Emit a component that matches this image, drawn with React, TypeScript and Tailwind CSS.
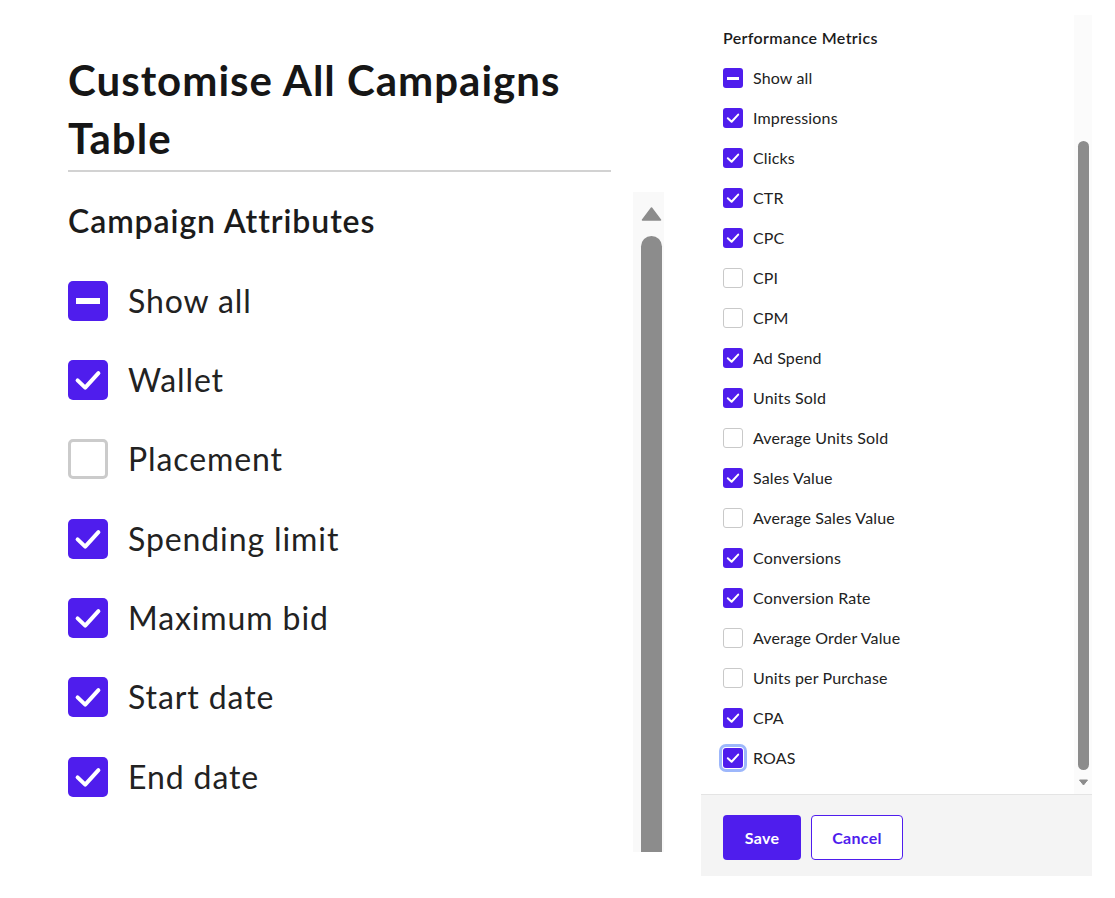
import React from "react";

type CheckState = "checked" | "unchecked" | "mixed";

function SmallBox({ state, focused }: { state: CheckState; focused?: boolean }) {
  const ring = focused ? "ring-[3px] ring-[#9db7fb] ring-offset-1 ring-offset-white" : "";
  if (state === "unchecked") {
    return <span className="block w-[20px] h-[20px] rounded-[3px] border-[1.5px] border-[#c9c9c9] bg-white shrink-0" />;
  }
  return (
    <span className={`flex items-center justify-center w-[20px] h-[20px] rounded-[3px] bg-[#4f1ded] shrink-0 ${ring}`}>
      {state === "checked" ? (
        <svg width="20" height="20" viewBox="0 0 20 20" fill="none">
          <path d="M4.8 10.2 L8.6 13.8 L15.2 6.6" stroke="white" strokeWidth="2" strokeLinecap="round" strokeLinejoin="round" />
        </svg>
      ) : (
        <span className="block w-[12px] h-[3px] bg-white" />
      )}
    </span>
  );
}

function LargeBox({ state }: { state: CheckState }) {
  if (state === "unchecked") {
    return <span className="block w-[40px] h-[40px] rounded-[5px] border-[3px] border-[#cbcbcb] bg-white shrink-0" />;
  }
  return (
    <span className="flex items-center justify-center w-[40px] h-[40px] rounded-[5px] bg-[#4f1ded] shrink-0">
      {state === "checked" ? (
        <svg width="40" height="40" viewBox="0 0 40 40" fill="none">
          <path d="M9.6 20.4 L17.2 27.6 L30.4 13.2" stroke="white" strokeWidth="4" strokeLinecap="round" strokeLinejoin="round" />
        </svg>
      ) : (
        <span className="block w-[24px] h-[6px] bg-white" />
      )}
    </span>
  );
}

const attributes: [string, CheckState][] = [
  ["Show all", "mixed"],
  ["Wallet", "checked"],
  ["Placement", "unchecked"],
  ["Spending limit", "checked"],
  ["Maximum bid", "checked"],
  ["Start date", "checked"],
  ["End date", "checked"],
];

const metrics: [string, CheckState][] = [
  ["Show all", "mixed"],
  ["Impressions", "checked"],
  ["Clicks", "checked"],
  ["CTR", "checked"],
  ["CPC", "checked"],
  ["CPI", "unchecked"],
  ["CPM", "unchecked"],
  ["Ad Spend", "checked"],
  ["Units Sold", "checked"],
  ["Average Units Sold", "unchecked"],
  ["Sales Value", "checked"],
  ["Average Sales Value", "unchecked"],
  ["Conversions", "checked"],
  ["Conversion Rate", "checked"],
  ["Average Order Value", "unchecked"],
  ["Units per Purchase", "unchecked"],
  ["CPA", "checked"],
  ["ROAS", "checked"],
];

export default function App() {
  return (
    <div
      className="w-[1115px] h-[898px] bg-white flex text-[#1b1b1b] overflow-hidden"
      style={{ fontFamily: "Lato, 'Noto Sans', sans-serif" }}
    >
      {/* Enlarged dialog view */}
      <div className="w-[633px] shrink-0 pl-[68px] pt-[51px] flex flex-col">
        <h1 className="w-[543px] text-[42px] leading-[58px] font-bold tracking-[1px] text-[#161616]">
          Customise All Campaigns Table
        </h1>
        <div className="w-[543px] h-[2px] bg-[#d2d2d2] mt-[3px]" />
        <h2 className="mt-[29px] text-[32px] leading-[40px] font-semibold tracking-[0.9px] text-[#1b1b1b]">
          Campaign Attributes
        </h2>
        <ul className="mt-[20px] flex flex-col">
          {attributes.map(([label, state]) => (
            <li key={label} className="h-[79.33px] flex items-center gap-[20px]">
              <LargeBox state={state} />
              <span className="text-[32px] leading-[40px] tracking-[0.9px] text-[#222]">{label}</span>
            </li>
          ))}
        </ul>
      </div>

      {/* Enlarged scrollbar */}
      <div className="w-[31px] shrink-0 mt-[192px] h-[660px] bg-[#f9f9f9] pl-[8px] flex flex-col">
        <svg width="21" height="14" viewBox="0 0 21 14" className="mt-[15px] shrink-0">
          <path d="M10.5 1 L19.5 13 L1.5 13 Z" fill="#8c8c8c" stroke="#8c8c8c" strokeWidth="1.5" strokeLinejoin="round" />
        </svg>
        <div className="mt-[15px] w-[21px] flex-1 bg-[#8c8c8c] rounded-t-[11px]" />
      </div>

      {/* Dialog panel */}
      <div className="ml-[37px] mt-[15px] w-[391px] shrink-0 flex flex-col self-start">
        <div className="h-[779px] flex">
          <div className="flex-1 pl-[22px] pt-[11px]">
            <h3 className="text-[16px] leading-[24px] font-semibold tracking-[0.35px] text-[#1b1b1b]">
              Performance Metrics
            </h3>
            <ul className="mt-[8px] flex flex-col">
              {metrics.map(([label, state], i) => (
                <li key={label + i} className="h-[40px] flex items-center gap-[10px]">
                  <SmallBox state={state} focused={label === "ROAS"} />
                  <span className="text-[16px] leading-[24px] tracking-[0.15px] text-[#222]">{label}</span>
                </li>
              ))}
            </ul>
          </div>
          <div className="w-[18px] bg-[#fbfbfb] flex flex-col items-start pl-[4px]">
            <div className="mt-[126px] w-[11px] h-[629px] bg-[#8c8c8c] rounded-[6px]" />
            <svg width="11" height="7" viewBox="0 0 11 7" className="mt-[9px]">
              <path d="M1.5 1 L9.5 1 L5.5 6 Z" fill="#8c8c8c" stroke="#8c8c8c" strokeWidth="1" strokeLinejoin="round" />
            </svg>
          </div>
        </div>
        <div className="h-[82px] border-t border-[#e4e4e4] bg-[#f4f4f4] px-[22px] pt-[20px] flex gap-[10px] items-start">
          <button className="h-[45px] w-[78px] rounded-[4px] bg-[#4f1ded] text-white text-[16px] font-bold tracking-[0.3px]">
            Save
          </button>
          <button className="h-[45px] w-[92px] rounded-[4px] bg-white border border-[#4f1ded] text-[#4f1ded] text-[16px] font-bold tracking-[0.3px]">
            Cancel
          </button>
        </div>
      </div>
    </div>
  );
}
